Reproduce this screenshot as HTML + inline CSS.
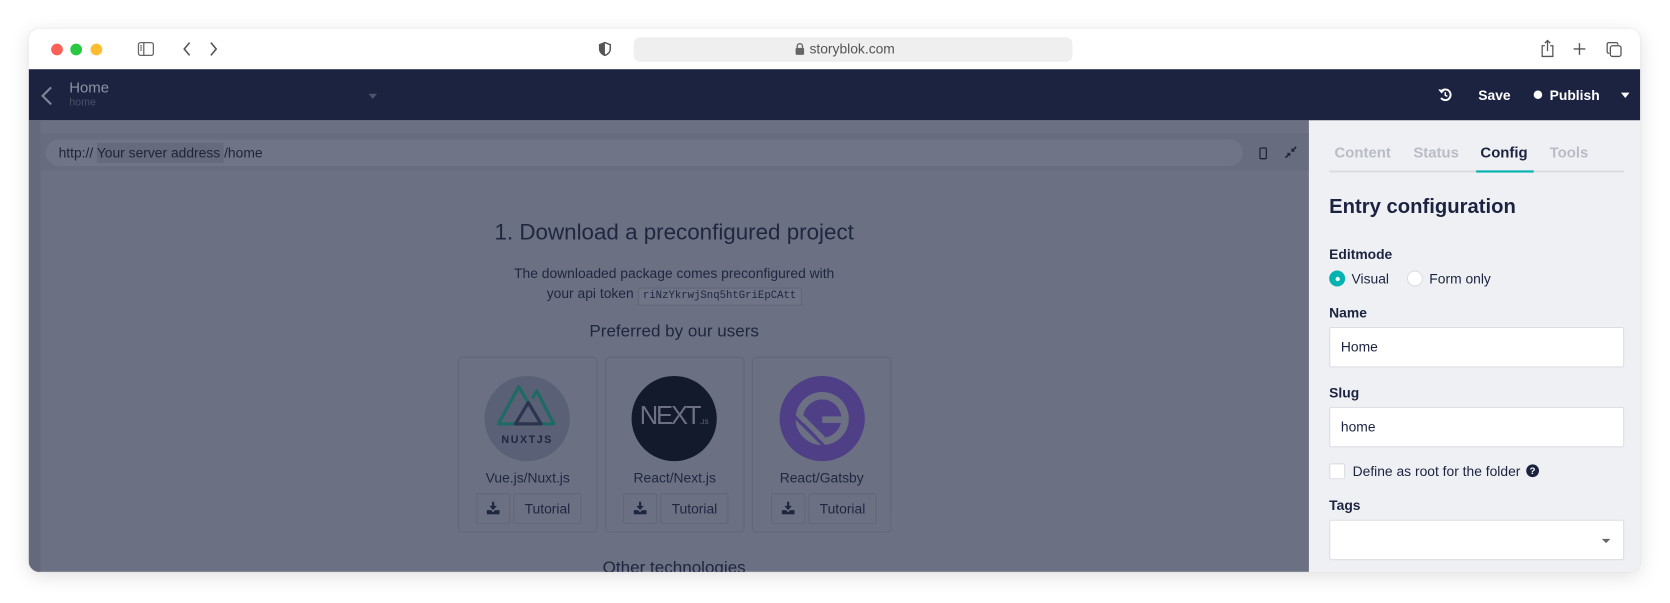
<!DOCTYPE html>
<html><head><meta charset="utf-8">
<style>
*{box-sizing:border-box;margin:0;padding:0}
html,body{width:1670px;height:602px;overflow:hidden;background:#fff;font-family:"Liberation Sans",Arial,sans-serif}
#s{position:absolute;left:0;top:0;width:1568px;height:566px;transform:scale(1.06505);transform-origin:0 0}
.a{position:absolute}
#win{left:27px;top:27px;width:1513px;height:510px;border-radius:10px;overflow:hidden;box-shadow:0 4px 18px rgba(0,0,0,.12),0 0 2px rgba(0,0,0,.08);background:#fff}
.t{white-space:nowrap}
</style></head><body><div id="s">
<div id="win" class="a">
 <div class="a" style="left:21px;top:14px;width:11px;height:11px;border-radius:50%;background:#fe5f57"></div>
 <div class="a" style="left:39px;top:14px;width:11px;height:11px;border-radius:50%;background:#28c840"></div>
 <div class="a" style="left:58px;top:14px;width:11px;height:11px;border-radius:50%;background:#febc2e"></div>
 <svg class="a" style="left:102px;top:12px" width="16" height="14" viewBox="0 0 16 14"><rect x="1" y="1" width="14" height="12" rx="2" fill="none" stroke="#666" stroke-width="1.2"/><line x1="6" y1="1" x2="6" y2="13" stroke="#666" stroke-width="1.2"/><line x1="2.5" y1="4" x2="4.5" y2="4" stroke="#666"/><line x1="2.5" y1="6" x2="4.5" y2="6" stroke="#666"/><line x1="2.5" y1="8" x2="4.5" y2="8" stroke="#666"/></svg>
 <svg class="a" style="left:143px;top:12px" width="40" height="14" viewBox="0 0 40 14"><path d="M8 1 L3 7 L8 13" fill="none" stroke="#555" stroke-width="1.5"/><path d="M28 1 L33 7 L28 13" fill="none" stroke="#555" stroke-width="1.5"/></svg>
 <svg class="a" style="left:535px;top:12px" width="12" height="14" viewBox="0 0 12 14"><path d="M6 1 L11 3 L11 7 C11 10 8.5 12 6 13 C3.5 12 1 10 1 7 L1 3 Z" fill="none" stroke="#555" stroke-width="1.4"/><path d="M6 1 L1 3 L1 7 C1 10 3.5 12 6 13 Z" fill="#555"/></svg>
 <div class="a" style="left:568px;top:8px;width:412px;height:23px;border-radius:6px;background:#efefef"></div>
 <svg class="a" style="left:719px;top:13px" width="10" height="12" viewBox="0 0 10 12"><path d="M2.5 5 V3.5 a2.5 2.5 0 0 1 5 0 V5" fill="none" stroke="#666" stroke-width="1.3"/><rect x="1" y="5" width="8" height="6.5" rx="1" fill="#666"/></svg>
 <div class="a t" style="left:733px;top:11px;font-size:13px;color:#555">storyblok.com</div>
 <svg class="a" style="left:1419px;top:10px" width="14" height="17" viewBox="0 0 14 17"><path d="M4.5 6 H2 V16 H12 V6 H9.5" fill="none" stroke="#555" stroke-width="1.2"/><path d="M7 11 V1 M4.5 3.5 L7 1 L9.5 3.5" fill="none" stroke="#555" stroke-width="1.2"/></svg>
 <svg class="a" style="left:1450px;top:13px" width="12" height="12" viewBox="0 0 12 12"><path d="M6 0.5 V11.5 M0.5 6 H11.5" stroke="#555" stroke-width="1.3"/></svg>
 <svg class="a" style="left:1481px;top:12px" width="15" height="15" viewBox="0 0 15 15"><rect x="4" y="4" width="10" height="10" rx="2" fill="none" stroke="#555" stroke-width="1.2"/><path d="M11 3 V2.5 a1.5 1.5 0 0 0 -1.5 -1.5 H2.5 a1.5 1.5 0 0 0 -1.5 1.5 V9.5 a1.5 1.5 0 0 0 1.5 1.5 H3" fill="none" stroke="#555" stroke-width="1.2"/></svg>

 <div class="a" style="left:0;top:38px;width:1513px;height:48px;background:#1b2340"></div>
 <svg class="a" style="left:11px;top:54px" width="12" height="18" viewBox="0 0 12 18"><path d="M10 1 L2 9 L10 17" fill="none" stroke="#7f8597" stroke-width="2"/></svg>
 <div class="a t" style="left:38px;top:47px;font-size:14px;color:#8d93a3">Home</div>
 <div class="a t" style="left:38px;top:64px;font-size:10px;color:#4a5068">home</div>
 <div class="a" style="left:319px;top:61px;border-left:4px solid transparent;border-right:4px solid transparent;border-top:5px solid #4d5369"></div>
 <svg class="a" style="left:1323px;top:55px" width="14" height="14" viewBox="0 0 14 14"><path d="M3 4 A5 5 0 1 1 3 10" fill="none" stroke="#fff" stroke-width="1.8"/><path d="M1 2 L3.5 5 L6 2.5" fill="#fff" stroke="#fff" stroke-width="1"/><path d="M7 4.5 V7.5 L9 8.5" fill="none" stroke="#fff" stroke-width="1.4"/></svg>
 <div class="a t" style="left:1361px;top:55px;font-size:13px;font-weight:bold;color:#fff">Save</div>
 <div class="a" style="left:1413px;top:58px;width:8px;height:8px;border-radius:50%;background:#fff"></div>
 <div class="a t" style="left:1428px;top:55px;font-size:13px;font-weight:bold;color:#fff">Publish</div>
 <div class="a" style="left:1495px;top:60px;border-left:4.5px solid transparent;border-right:4.5px solid transparent;border-top:5px solid #fff"></div>

 <div class="a" style="left:0;top:86px;width:1202px;height:424px;background:#6b7082"></div>
 <div class="a" style="left:0;top:86px;width:11px;height:424px;background:#646a7b"></div>
 <div class="a" style="left:11px;top:98px;width:1191px;height:35px;background:#676c7e"></div>
 <div class="a" style="left:16px;top:104px;width:1124px;height:25px;border-radius:13px;background:#6f7486"></div>
 <div class="a t" style="left:28px;top:109px;font-size:13px;color:#1e2435">http:// <span style="background:#656a7c;padding:2px 0">Your server address </span>/home</div>
 <svg class="a" style="left:1155px;top:111px" width="8" height="12" viewBox="0 0 8 12"><rect x="1" y="1" width="6" height="10" rx="1" fill="none" stroke="#1e2435" stroke-width="1.2"/></svg>
 <svg class="a" style="left:1179px;top:110px" width="12" height="12" viewBox="0 0 12 12"><path d="M11 1 L7 5 M1 11 L5 7" stroke="#1e2435" stroke-width="1.5"/><path d="M6.5 2 V5.5 H10 Z M5.5 10 V6.5 H2 Z" fill="#1e2435"/></svg>

 <div class="a t" style="left:0;width:1212px;top:180px;text-align:center;font-size:21px;color:#1f2640">1. Download a preconfigured project</div>
 <div class="a t" style="left:0;width:1212px;top:220px;text-align:center;font-size:13px;color:#1f2640;line-height:19px">The downloaded package comes preconfigured with<br>your api token <span style="font-family:'Liberation Mono',monospace;font-size:10px;border:1px solid #62677a;border-radius:2px;padding:2px 4px;background:#6f7486">riNzYkrwjSnq5htGriEpCAtt</span></div>
 <div class="a t" style="left:0;width:1212px;top:276px;text-align:center;font-size:16px;color:#1f2640">Preferred by our users</div>

 <div class="a" style="left:403px;top:308px;width:131px;height:165px;border:1px solid #62677a;border-radius:4px"></div>
 <div class="a" style="left:541px;top:308px;width:131px;height:165px;border:1px solid #62677a;border-radius:4px"></div>
 <div class="a" style="left:679px;top:308px;width:131px;height:165px;border:1px solid #62677a;border-radius:4px"></div>

 <div class="a" style="left:428px;top:326px;width:80px;height:80px;border-radius:50%;background:#5a6075"></div>
 <svg class="a" style="left:428px;top:326px" width="80" height="80" viewBox="0 0 80 80"><path d="M29 45 H13 L32 10 L41 25 M45 21 L49 14 L65 45 H53" fill="none" stroke="#1e6b66" stroke-width="3" stroke-linejoin="round"/><path d="M29 45 L41 25 L53 45 Z" fill="none" stroke="#2c3550" stroke-width="3" stroke-linejoin="round"/><text x="40" y="63" text-anchor="middle" font-family="Liberation Sans" font-size="10" font-weight="bold" letter-spacing="1.5" fill="#1f2640">NUXTJS</text></svg>
 <div class="a" style="left:566px;top:326px;width:80px;height:80px;border-radius:50%;background:#131a2c"></div>
 <div class="a t" style="left:566px;top:350px;width:80px;text-align:center;font-size:24px;color:#6b7082;letter-spacing:-2px;font-weight:300">NEXT<span style="font-size:6px;letter-spacing:0">.JS</span></div>
 <div class="a" style="left:705px;top:326px;width:80px;height:80px;border-radius:50%;background:#4f3f86"></div>
 <svg class="a" style="left:705px;top:326px" width="80" height="80" viewBox="0 0 80 80"><circle cx="40" cy="40" r="25" fill="#6b7082"/><circle cx="40" cy="40" r="18" fill="#4f3f86"/><path d="M40 38 H58 V44 H40 Z" fill="#6b7082"/><path d="M14 40 L40 66 L44 66 L14 36 Z" fill="#4f3f86"/><path d="M21 39 L41 59" stroke="#6b7082" stroke-width="5"/></svg>

 <div class="a t" style="left:403px;top:414px;width:131px;text-align:center;font-size:13px;color:#1f2640">Vue.js/Nuxt.js</div>
 <div class="a t" style="left:541px;top:414px;width:131px;text-align:center;font-size:13px;color:#1f2640">React/Next.js</div>
 <div class="a t" style="left:679px;top:414px;width:131px;text-align:center;font-size:13px;color:#1f2640">React/Gatsby</div>

 <div class="a" style="left:420px;top:436px;width:32px;height:29px;border:1px solid #62677a;border-radius:2px"></div>
 <div class="a t" style="left:455px;top:436px;width:64px;height:29px;border:1px solid #62677a;border-radius:2px;font-size:13px;color:#1f2640;text-align:center;line-height:27px">Tutorial</div>
 <div class="a" style="left:558px;top:436px;width:32px;height:29px;border:1px solid #62677a;border-radius:2px"></div>
 <div class="a t" style="left:593px;top:436px;width:64px;height:29px;border:1px solid #62677a;border-radius:2px;font-size:13px;color:#1f2640;text-align:center;line-height:27px">Tutorial</div>
 <div class="a" style="left:697px;top:436px;width:32px;height:29px;border:1px solid #62677a;border-radius:2px"></div>
 <div class="a t" style="left:732px;top:436px;width:64px;height:29px;border:1px solid #62677a;border-radius:2px;font-size:13px;color:#1f2640;text-align:center;line-height:27px">Tutorial</div>
 <svg class="a" style="left:430px;top:444px" width="12" height="12" viewBox="0 0 12 12"><path d="M5 0 H7 V4 H9.5 L6 8 L2.5 4 H5 Z M0 8 H4 L6 10 L8 8 H12 V12 H0 Z" fill="#1f2640"/></svg>
 <svg class="a" style="left:568px;top:444px" width="12" height="12" viewBox="0 0 12 12"><path d="M5 0 H7 V4 H9.5 L6 8 L2.5 4 H5 Z M0 8 H4 L6 10 L8 8 H12 V12 H0 Z" fill="#1f2640"/></svg>
 <svg class="a" style="left:707px;top:444px" width="12" height="12" viewBox="0 0 12 12"><path d="M5 0 H7 V4 H9.5 L6 8 L2.5 4 H5 Z M0 8 H4 L6 10 L8 8 H12 V12 H0 Z" fill="#1f2640"/></svg>
 <div class="a t" style="left:0;width:1212px;top:498px;text-align:center;font-size:16px;color:#1f2640">Other technologies</div>

 <div class="a" style="left:1202px;top:86px;width:311px;height:424px;background:#eff0f4"></div>
 <div class="a t" style="left:1226px;top:108px;font-size:14px;font-weight:bold;color:#b9bcc6">Content</div>
 <div class="a t" style="left:1300px;top:108px;font-size:14px;font-weight:bold;color:#b9bcc6">Status</div>
 <div class="a t" style="left:1363px;top:108px;font-size:14px;font-weight:bold;color:#1b2340">Config</div>
 <div class="a t" style="left:1428px;top:108px;font-size:14px;font-weight:bold;color:#b9bcc6">Tools</div>
 <div class="a" style="left:1221px;top:133px;width:277px;height:1.5px;background:#dcdde2"></div>
 <div class="a" style="left:1359px;top:132.5px;width:54px;height:2px;background:#00b3b0"></div>
 <div class="a t" style="left:1221px;top:157px;font-size:19px;font-weight:bold;color:#1b2340">Entry configuration</div>
 <div class="a t" style="left:1221px;top:204px;font-size:13px;font-weight:bold;color:#1b2340">Editmode</div>
 <div class="a" style="left:1221px;top:227px;width:15px;height:15px;border-radius:50%;background:#00b3b0"></div>
 <div class="a" style="left:1226.5px;top:232.5px;width:4px;height:4px;border-radius:50%;background:#fff"></div>
 <div class="a t" style="left:1242px;top:227px;font-size:13px;color:#1b2340">Visual</div>
 <div class="a" style="left:1294px;top:227px;width:15px;height:15px;border-radius:50%;background:#fff;border:1px solid #dcdde2"></div>
 <div class="a t" style="left:1315px;top:227px;font-size:13px;color:#1b2340">Form only</div>
 <div class="a t" style="left:1221px;top:259px;font-size:13px;font-weight:bold;color:#1b2340">Name</div>
 <div class="a t" style="left:1221px;top:280px;width:277px;height:38px;background:#fff;border:1px solid #dcdde2;border-radius:2px;padding-left:10px;line-height:36px;font-size:13px;color:#1b2340">Home</div>
 <div class="a t" style="left:1221px;top:334px;font-size:13px;font-weight:bold;color:#1b2340">Slug</div>
 <div class="a t" style="left:1221px;top:355px;width:277px;height:38px;background:#fff;border:1px solid #dcdde2;border-radius:2px;padding-left:10px;line-height:36px;font-size:13px;color:#1b2340">home</div>
 <div class="a" style="left:1221px;top:408px;width:15px;height:15px;background:#fff;border:1px solid #dcdde2;border-radius:2px"></div>
 <div class="a t" style="left:1243px;top:408px;font-size:13px;color:#1b2340">Define as root for the folder</div>
 <div class="a" style="left:1406px;top:409px;width:12px;height:12px;border-radius:50%;background:#1b2340;color:#fff;font-size:9px;font-weight:bold;text-align:center;line-height:12px">?</div>
 <div class="a t" style="left:1221px;top:440px;font-size:13px;font-weight:bold;color:#1b2340">Tags</div>
 <div class="a" style="left:1221px;top:461px;width:277px;height:38px;background:#fff;border:1px solid #dcdde2;border-radius:2px"></div>
 <div class="a" style="left:1477px;top:479px;border-left:4px solid transparent;border-right:4px solid transparent;border-top:4px solid #666"></div>
</div>
</div></body></html>
